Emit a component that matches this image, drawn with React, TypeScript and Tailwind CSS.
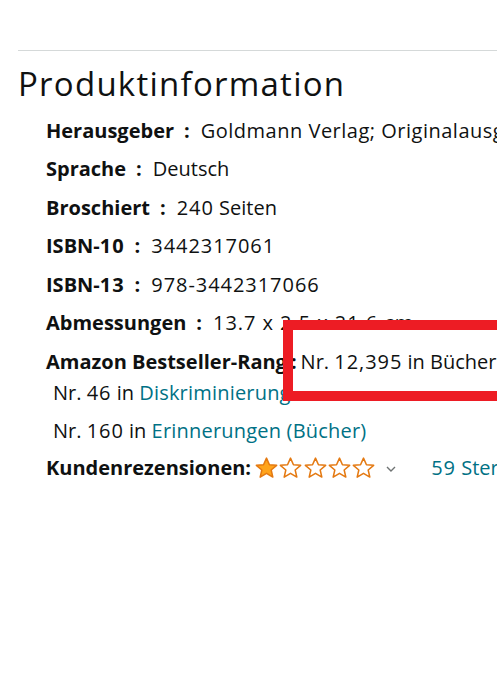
import React from "react";

const Star = ({ filled }: { filled: boolean }) => (
  <svg width="23" height="22" viewBox="0 0 24 23" className="shrink-0">
    <polygon
      points="12,1.2 15.1,8.1 22.6,8.7 16.9,13.6 18.6,21 12,17.1 5.4,21 7.1,13.6 1.4,8.7 8.9,8.1"
      fill={filled ? "#FFA41C" : "#ffffff"}
      stroke="#E47911"
      strokeWidth="1.6"
      strokeLinejoin="round"
    />
  </svg>
);

const D = ({ children }: { children: React.ReactNode }) => (
  <span className="tracking-[0.95px]">{children}</span>
);

const Row = ({ label, value }: { label: React.ReactNode; value: React.ReactNode }) => (
  <div className="h-[38.4px] leading-[38.4px] whitespace-nowrap">
    <span className="font-bold">{label}</span>
    <span className="font-bold ml-[10px] mr-[11px]">:</span>
    <span>{value}</span>
  </div>
);

export default function App() {
  return (
    <div
      className="relative w-[497px] h-[687px] overflow-hidden bg-white text-[#0F1111]"
      style={{ fontFamily: '"Open Sans", "Noto Sans", sans-serif' }}
    >
      <div className="pl-[18px] pt-[50px] w-[760px]">
        <div className="border-t border-[#d5d9d9] w-full" />
        <h2 className="mt-[13px] text-[33px] leading-[40px] font-normal tracking-[1.25px]">
          Produktinformation
        </h2>
        <div className="pl-[28px] mt-[8px] text-[20px]">
          <Row
            label="Herausgeber"
            value={<span className="tracking-[0.5px]">Goldmann Verlag; Originalausgabe Edition (7. Juni 2016)</span>}
          />
          <Row label="Sprache" value="Deutsch" />
          <Row label="Broschiert" value={<><D>240</D> Seiten</>} />
          <Row label={<>ISBN-<D>10</D></>} value={<D>3442317061</D>} />
          <Row label={<>ISBN-<D>13</D></>} value={<D>978-3442317066</D>} />
          <Row label="Abmessungen" value={<D>13.7 x 2.5 x 21.6 cm</D>} />
          <div className="h-[38.4px] leading-[38.4px] whitespace-nowrap mt-[1px]">
            <span className="font-bold">Amazon Bestseller-Rang</span>
            <span className="font-bold mx-[4px]">:</span>
            <span>
              Nr. <D>12,395</D> in Bücher (Siehe Top 100 in Bücher)
            </span>
          </div>
          <div className="pl-[7px] -mt-[7.4px] h-[38.4px] leading-[38.4px] whitespace-nowrap">
            Nr. <D>46</D> in <span className="text-[#007185] tracking-[0.2px]">Diskriminierung</span>
          </div>
          <div className="pl-[7px] -mt-[1px] h-[38.4px] leading-[38.4px] whitespace-nowrap">
            Nr. <D>160</D> in <span className="text-[#007185] tracking-[0.2px]">Erinnerungen (Bücher)</span>
          </div>
          <div className="flex items-center h-[38.4px] -mt-[1px] whitespace-nowrap">
            <span className="font-bold">Kundenrezensionen:</span>
            <div className="flex items-center gap-[1.3px] ml-[4px]">
              <Star filled />
              <Star filled={false} />
              <Star filled={false} />
              <Star filled={false} />
              <Star filled={false} />
            </div>
            <svg width="10" height="6" viewBox="0 0 10 6" className="ml-[11px] mt-[2px]">
              <polyline points="1,1 5,5 9,1" fill="none" stroke="#6f7373" strokeWidth="1.4" />
            </svg>
            <span className="ml-[35px] text-[#007185]">
              <D>59</D> Sternebewertungen
            </span>
          </div>
        </div>
      </div>
      <div className="absolute left-[283px] top-[320px] w-[224px] h-[81px] border-[10.5px] border-[#ED1C24]" />
    </div>
  );
}
